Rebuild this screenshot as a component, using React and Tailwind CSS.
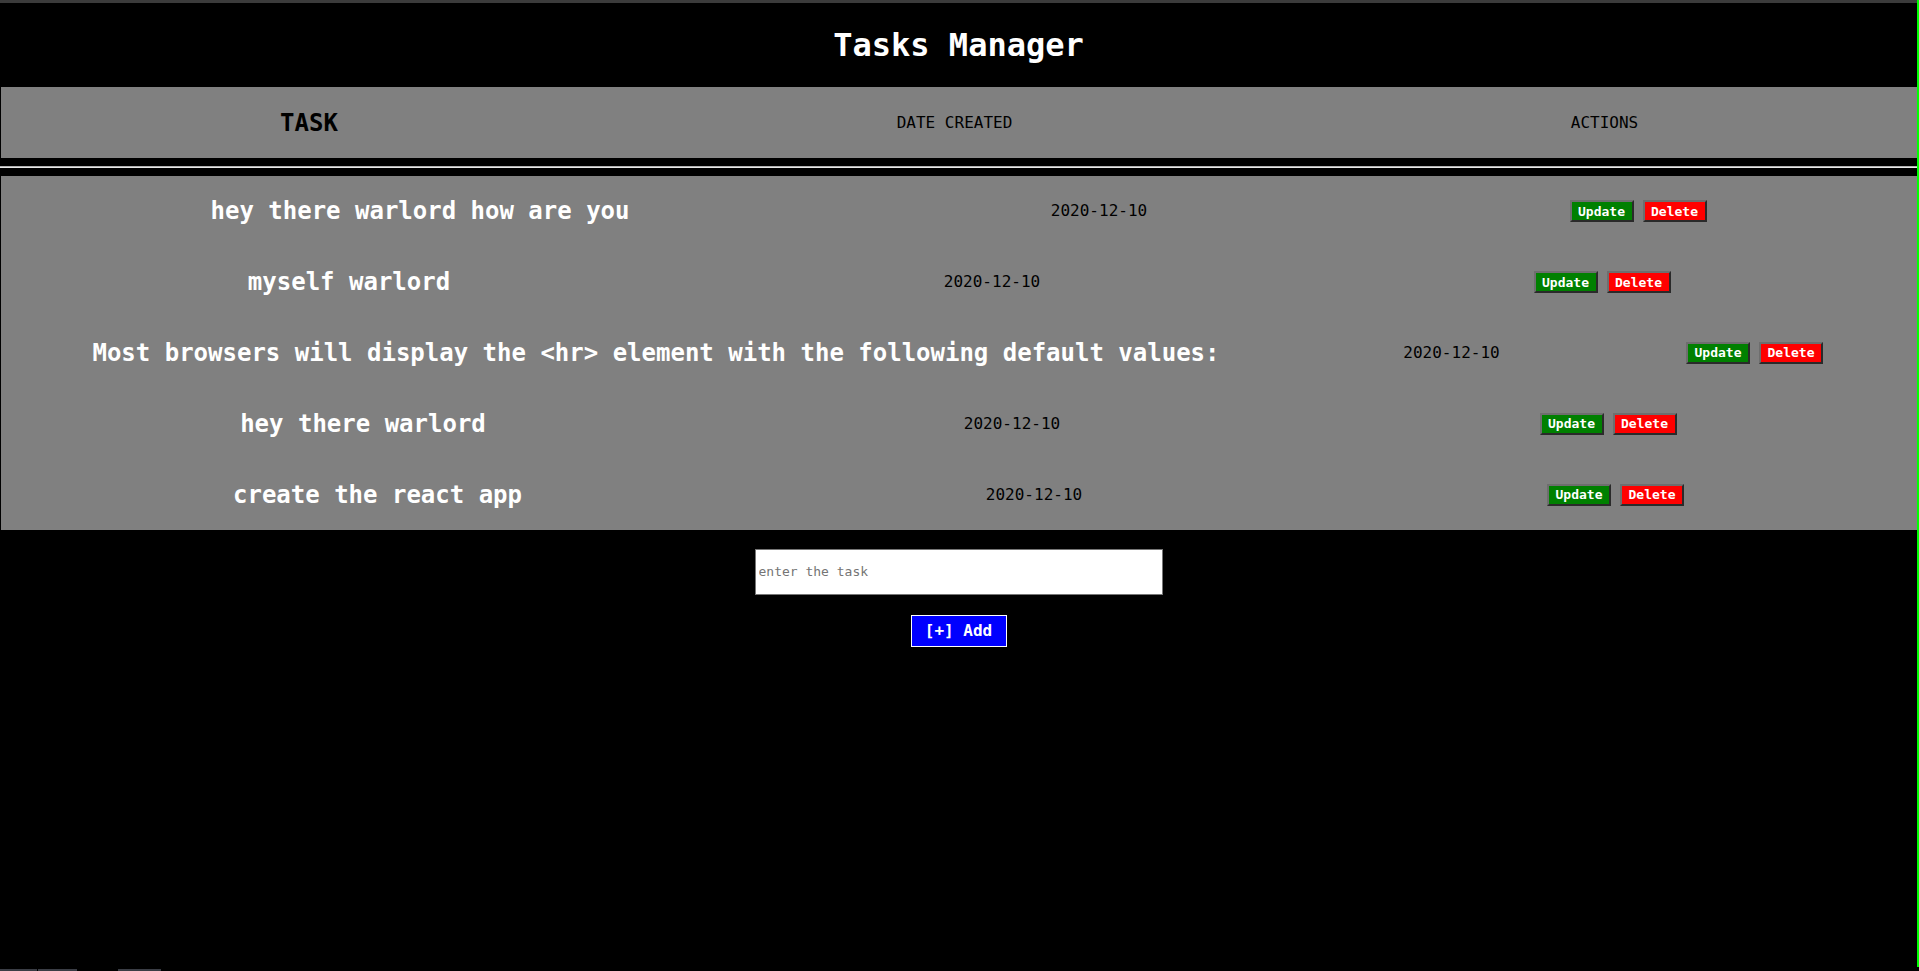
import React from 'react';

const mono = { fontFamily: "'DejaVu Sans Mono', 'Liberation Mono', monospace" };

const tasks = [
  { id: 1, title: 'hey there warlord how are you', date: '2020-12-10', cols: 'grid-cols-[838px_520px_558px]' },
  { id: 2, title: 'myself warlord', date: '2020-12-10', cols: 'grid-cols-[696px_590px_630px]' },
  {
    id: 3,
    title: 'Most browsers will display the <hr> element with the following default values:',
    date: '2020-12-10',
    cols: 'grid-cols-[1310px_281px_325px]'
  },
  { id: 4, title: 'hey there warlord', date: '2020-12-10', cols: 'grid-cols-[724px_574px_618px]' },
  { id: 5, title: 'create the react app', date: '2020-12-10', cols: 'grid-cols-[753px_560px_603px]' }
];

const ActionButton = ({ label, color }) => (
  <button
    className={`w-[64px] h-[22px] flex items-center justify-center text-[13px] font-bold leading-none text-white border-2 border-t-[#6e6e6e] border-l-[#6e6e6e] border-b-[#2a2a2a] border-r-[#2a2a2a] ${color}`}
  >
    {label}
  </button>
);

const TaskRow = ({ task }) => (
  <div className={`grid ${task.cols} h-[70.8px] items-center`}>
    <div className="text-center text-[24px] font-bold text-white whitespace-nowrap">{task.title}</div>
    <div className="text-center text-[16px] text-black">{task.date}</div>
    <div className="flex justify-center gap-[9px]">
      <ActionButton label="Update" color="bg-[#008000]" />
      <ActionButton label="Delete" color="bg-[#ff0000]" />
    </div>
  </div>
);

const App = () => {
  return (
    <div className="relative min-h-screen w-full bg-black flex" style={mono}>
      <div className="flex-1 flex flex-col">
        {/* top strip */}
        <div className="h-[3px] bg-[#3b3b3b]" />

        <h1 className="h-[84px] flex items-center justify-center text-[32px] font-bold text-white">
          Tasks Manager
        </h1>

        {/* header table */}
        <div className="pl-[1px]">
          <div className="grid grid-cols-[616px_675px_625px] h-[71px] items-center bg-[#808080] text-black">
            <div className="text-center text-[24px] font-bold">TASK</div>
            <div className="text-center text-[16px]">DATE CREATED</div>
            <div className="text-center text-[16px]">ACTIONS</div>
          </div>
        </div>

        <div className="my-[8px] h-[2px] border-t border-[#b0b0b0] bg-[#e8e8e8]" />

        {/* task rows */}
        <div className="pl-[1px]">
          <div className="bg-[#808080]">
            {tasks.map((task) => (
              <TaskRow key={task.id} task={task} />
            ))}
          </div>
        </div>

        {/* add form */}
        <div className="flex flex-col items-center gap-[20px] pt-[19px]">
          <input
            type="text"
            placeholder="enter the task"
            className="w-[408px] h-[46px] bg-white border border-[#767676] px-[3px] text-[13px] text-black placeholder:text-[#757575] outline-none"
          />
          <button className="w-[96px] h-[32px] bg-[#0000ff] border border-white text-white text-[16px] font-bold">
            [+] Add
          </button>
        </div>
      </div>

      {/* right edge line */}
      <div className="w-[2px] bg-[#00ff00] mb-[4px]" />

      {/* bottom-left strip */}
      <div className="absolute bottom-0 left-0 flex h-[2px]">
        <div className="w-[37px] bg-[#3a3d45]" />
        <div className="w-[39px] ml-[1px] bg-[#3a3d45]" />
        <div className="w-[43px] ml-[41px] bg-[#3a3d45]" />
      </div>
    </div>
  );
};

export default App;
